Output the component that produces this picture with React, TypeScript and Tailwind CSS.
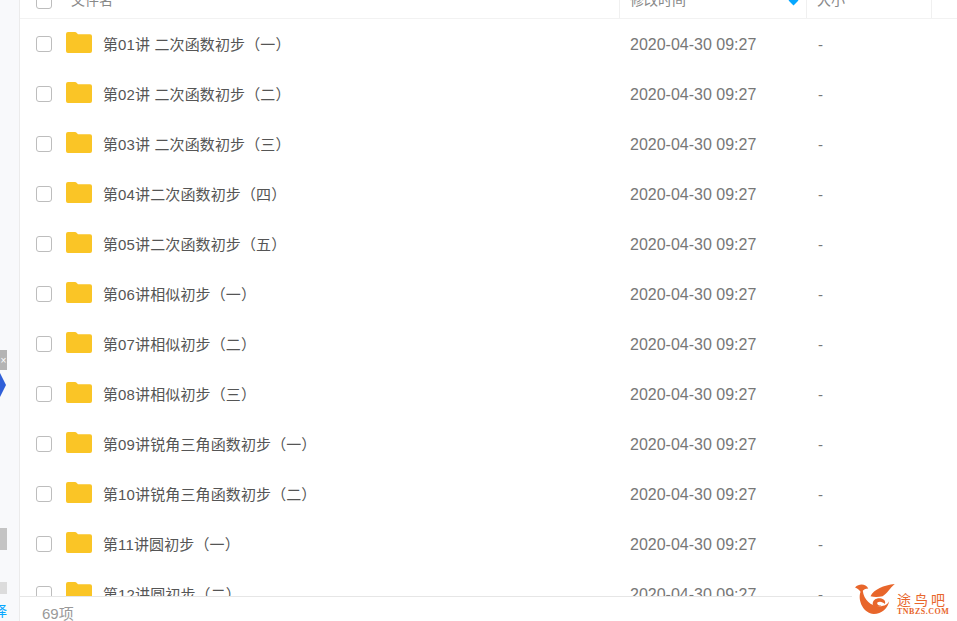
const rows = [
  '第01讲 二次函数初步（一）',
  '第02讲 二次函数初步（二）',
  '第03讲 二次函数初步（三）',
  '第04讲二次函数初步（四）',
  '第05讲二次函数初步（五）',
  '第06讲相似初步（一）',
  '第07讲相似初步（二）',
  '第08讲相似初步（三）',
  '第09讲锐角三角函数初步（一）',
  '第10讲锐角三角函数初步（二）',
  '第11讲圆初步（一）',
  '第12讲圆初步（二）',
];

const font = { fontFamily: '"Liberation Sans", "Noto Sans CJK SC", sans-serif' };

function FolderIcon() {
  return (
    <svg width="26" height="21" viewBox="0 0 26 21" className="shrink-0">
      <path d="M0 2a2 2 0 0 1 2-2h7a2 2 0 0 1 1.6.8L12 2.2h12a2 2 0 0 1 2 2V19a2 2 0 0 1-2 2H2a2 2 0 0 1-2-2z" fill="#fac526" />
    </svg>
  );
}

function Row({ name }: { name: string }) {
  return (
    <div className="flex h-[50px] shrink-0 items-center">
      <div className="ml-[16px] h-4 w-4 shrink-0 rounded-[3px] border border-[#bdbdbd] bg-white" />
      <div className="ml-[14px] -mt-1">
        <FolderIcon />
      </div>
      <div className="ml-[11px] w-[527px] shrink-0 pt-[2px] text-[15px] tracking-[0.12px] text-[#555]">{name}</div>
      <div className="w-[188px] shrink-0 pt-[2px] text-[16px] text-[#777]">2020-04-30 09:27</div>
      <div className="pt-[2px] text-[15px] text-[#777]">-</div>
    </div>
  );
}

export default function App() {
  return (
    <div className="relative flex h-[621px] w-[957px] overflow-hidden bg-white" style={font}>
      <aside className="flex w-5 shrink-0 flex-col overflow-hidden border-r border-[#ebebeb] bg-[#f8f9fb]">
        <div className="mt-[350px] flex h-[20px] w-[7px] shrink-0 items-center justify-center overflow-hidden bg-[#b4b4b4] text-[10px] text-white">
          ×
        </div>
        <svg width="7" height="24" viewBox="0 0 7 24" className="mt-[3px] shrink-0">
          <path d="M0 0l6 12-6 12z" fill="#2f5fd8" />
        </svg>
        <div className="mt-[131px] h-[22px] w-[7px] shrink-0 bg-[#c4c4c4]" />
        <div className="mt-[32px] h-[12px] w-[7px] shrink-0 bg-[#dcdcdc]" />
        <div className="mt-[9px] -ml-[7px] shrink-0 text-[14px] leading-[16px] text-[#06a7ff]">择</div>
      </aside>

      <main className="flex min-w-0 flex-1 flex-col">
        <header className="h-[19px] shrink-0 overflow-hidden border-b border-[#f2f2f2] text-[14px] text-[#888]">
          <div className="-mt-[17px] flex h-[35px] w-full items-center">
            <div className="ml-[16px] h-4 w-4 shrink-0 rounded-[3px] border border-[#bdbdbd]" />
            <div className="ml-[19px] w-[548px] shrink-0">文件名</div>
            <div className="relative flex h-full w-[187px] shrink-0 items-center border-l border-[#f0f0f0] pl-[10px]">
              修改时间
              <span className="absolute right-[9px] top-[14px] h-[7px] w-[7px] rotate-45 bg-[#06a7ff]" />
            </div>
            <div className="flex h-full w-[125px] shrink-0 items-center border-l border-[#f0f0f0] pl-[10px]">大小</div>
            <div className="h-full flex-1 border-l border-[#f0f0f0]" />
          </div>
        </header>

        <div className="flex min-h-0 flex-1 flex-col overflow-hidden">
          {rows.map((name) => (
            <Row key={name} name={name} />
          ))}
        </div>

        <footer className="h-[25px] shrink-0 border-t border-[#e6e6e6] bg-white pl-[22px] pt-[7px] text-[15px] leading-[20px] text-[#999]">
          69项
        </footer>
      </main>

      {/* watermark */}
      <div className="absolute left-[852px] top-[583px] flex bg-white pl-[3px] pr-[8px]">
        <svg width="42" height="32" viewBox="0 0 38 29" className="shrink-0">
          <path d="M0 4c4-4 10-3 12 1-3 0-4 1-5 2 1 8 7 14 15 14 5 0 8-2 9-5-1 7-7 12-14 12C8 28 2 16 5 8 4 6 2 5 0 4z" fill="#e8662b" />
          <path d="M14 12c3-6 12-10 22-11-4 3-7 9-11 11-4 1-8 1-11 0z" fill="#e8662b" />
          <path d="M16 19c0-4 4-6 8-5 3 1 4 3 3 5-2-2-5-3-7-1 0 2 2 3 4 2-2 2-8 2-8-1z" fill="#e8662b" />
        </svg>
        <div className="mt-[10px] flex flex-col items-start text-[#e8662b]">
          <div className="text-[14px] leading-[15px] tracking-[3px]">途鸟吧</div>
          <div className="text-[8px] font-bold leading-[8px] tracking-[0.5px]" style={{ fontFamily: '"Liberation Serif", serif' }}>
            TNBZS.COM
          </div>
        </div>
      </div>
    </div>
  );
}
